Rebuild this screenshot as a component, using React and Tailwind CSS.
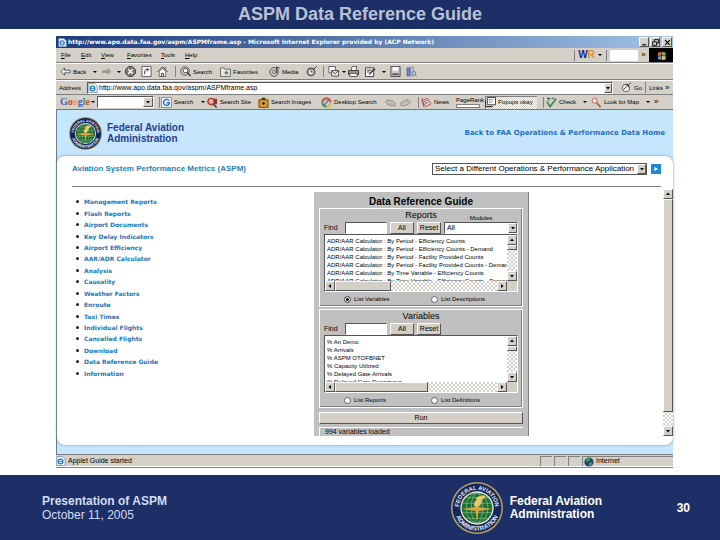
import React, { useState } from 'react';
import clsx from 'clsx';

const menuItems = [
  { name: 'File', width: 'w-5' },
  { name: 'Edit', width: 'w-5' },
  { name: 'View', width: 'w-[26px]' },
  { name: 'Favorites', width: 'w-[34px]' },
  { name: 'Tools', width: 'w-6' },
  { name: 'Help', width: 'w-5' }
];

const navLinks = [
  'Management Reports', 'Flash Reports', 'Airport Documents', 'Key Delay Indicators',
  'Airport Efficiency', 'AAR/ADR Calculator', 'Analysis', 'Causality',
  'Weather Factors', 'Enroute', 'Taxi Times', 'Individual Flights',
  'Cancelled Flights', 'Download', 'Data Reference Guide', 'Information'
];

const reports = [
  'ADR/AAR Calculator : By Period - Efficiency Counts',
  'ADR/AAR Calculator : By Period - Efficiency Counts - Demand',
  'ADR/AAR Calculator : By Period - Facility Provided Counts',
  'ADR/AAR Calculator : By Period - Facility Provided Counts - Demand',
  'ADR/AAR Calculator : By Time Variable - Efficiency Counts',
  'ADR/AAR Calculator : By Time Variable - Efficiency Counts - Demand'
];

const variables = [
  '% An Demo', '% Arrivals', '% ASPM OTOFBNET', '% Capacity Utilized',
  '% Delayed Gate Arrivals', '% Delayed Gate Departures'
];

/* ---------- Icons ---------- */

function Seal({ id, className }) {
  return (
    <svg viewBox="0 0 100 100" className={className} role="img" aria-label="Federal Aviation Administration seal">
      <circle cx="50" cy="50" r="50" fill="#b39b62" />
      <circle cx="50" cy="50" r="47" fill="#14275c" />
      <circle cx="50" cy="50" r="32" fill="#f0efe0" />
      <circle cx="50" cy="50" r="29.5" fill="#1c7034" />
      <g fill="none" stroke="#a9cf9c" strokeWidth="1">
        <ellipse cx="50" cy="50" rx="11" ry="29" />
        <ellipse cx="50" cy="50" rx="21" ry="29" />
        <path d="M22 41h56M22 59h56M28 30h44M28 70h44" />
      </g>
      <path d="M50 78l-3-22-26-4 26-4 3-20 3 20 26 4-26 4z" fill="#d9a441" />
      <path d="M45 47c-2-7 2-12 6-14l-4-1c6-6 14-7 20-5-3 4-4 6-8 8 1 5-1 9-6 12z" fill="#e9c86d" />
      <path id={`${id}-top`} d="M15 50a35 35 0 0 1 70 0" fill="none" />
      <path id={`${id}-bottom`} d="M6.500 50a43.500 43.500 0 0 0 87 0" fill="none" />
      <g fill="#e6e9f2" fontFamily="Liberation Sans, sans-serif" fontWeight="bold" textAnchor="middle">
        <text fontSize="11"><textPath href={`#${id}-top`} startOffset="50%">FEDERAL AVIATION</textPath></text>
        <text fontSize="12"><textPath href={`#${id}-bottom`} startOffset="50%">ADMINISTRATION</textPath></text>
      </g>
    </svg>
  );
}

function Icon({ children, className = 'size-[11px]' }) {
  return (
    <svg viewBox="0 0 12 12" className={clsx('shrink-0', className)} aria-hidden="true">
      {children}
    </svg>
  );
}

const PageIcon = ({ className }) => (
  <Icon className={className}>
    <path d="M1 .5h7l3 3v8H1z" fill="#f2f8fd" stroke="#6b93b8" />
    <circle cx="5.5" cy="6.5" r="2.8" fill="none" stroke="#2b78c2" strokeWidth="1.5" />
    <path d="M3 6.5h5.5" stroke="#2b78c2" />
  </Icon>
);
const BackIcon = () => <Icon><path d="M1 6l4-4v2.5h6v3H5V10z" fill="#e8ece8" stroke="#444" strokeWidth=".9" /></Icon>;
const ForwardIcon = () => <Icon><path d="M11 6L7 2v2.5H1v3h6V10z" fill="#9a9a94" /></Icon>;
const StopIcon = () => (
  <Icon>
    <path d="M4 .5h4L11.5 4v4L8 11.5H4L.5 8V4z" fill="#777" stroke="#444" />
    <path d="M3.5 3.5l5 5m0-5l-5 5" stroke="#fff" strokeWidth="1.4" />
  </Icon>
);
const RefreshIcon = () => (
  <Icon>
    <path d="M1 .5h10v11H1z" fill="#fafafa" stroke="#333" strokeWidth=".8" />
    <path d="M4 9V6c0-2 2-3 4-2M6.5 2l2 2-2 2" fill="none" stroke="#333" />
  </Icon>
);
const HomeIcon = () => (
  <Icon>
    <path d="M.5 6.5L6 1l5.500 5.500" fill="none" stroke="#333" />
    <path d="M2.500 6L6 2.500 9.500 6v5.500h-7z" fill="#fff" stroke="#444" strokeWidth=".8" />
    <path d="M5 11.500V8h2v3.500M9 1v2" stroke="#333" fill="none" />
  </Icon>
);
const FindIcon = () => (
  <Icon>
    <circle cx="5.500" cy="5.500" r="4.700" fill="#c9cccb" stroke="#555" />
    <circle cx="6" cy="5" r="2.500" fill="#fff" stroke="#444" />
    <path d="M8 7l3.500 4" stroke="#333" strokeWidth="1.500" />
  </Icon>
);
const FavoritesIcon = () => (
  <Icon>
    <path d="M.5 2h4l1 1.500h6v8H.5z" fill="#e8e6dd" stroke="#555" strokeWidth=".9" />
    <path d="M7 4.500l.8 1.800 2 .2-1.500 1.300.4 2L7 8.800l-1.700 1 .4-2L4.200 6.500l2-.2z" fill="#777" />
  </Icon>
);
const MediaIcon = () => (
  <Icon>
    <circle cx="5.500" cy="6.500" r="4.800" fill="#bfc4c2" stroke="#555" />
    <circle cx="5.500" cy="6.500" r="1.600" fill="#fff" stroke="#555" />
    <path d="M8.500 8V1l3 1.500" fill="none" stroke="#222" />
  </Icon>
);
const HistoryIcon = () => (
  <Icon>
    <circle cx="5.500" cy="6.500" r="4.800" fill="#555b58" />
    <circle cx="5.500" cy="6.500" r="3" fill="#e9ebea" />
    <path d="M5.500 4.500v2h2M8 4l3.500-3.500" stroke="#333" fill="none" />
  </Icon>
);
const MailIcon = () => (
  <Icon>
    <path d="M1 .5h7v7H1z" fill="#fff" stroke="#555" />
    <path d="M4 5h7.500v6H4z" fill="#eee" stroke="#444" />
    <path d="M4 5l3.700 3.500L11.500 5" fill="none" stroke="#444" />
  </Icon>
);
const PrintIcon = () => (
  <Icon>
    <path d="M3.500 5l1-4.500h5L8.500 5" fill="#fff" stroke="#555" />
    <path d="M.5 5h11v4.500H.5z" fill="#9b9b96" stroke="#333" />
    <path d="M2 8h8v3.500H2z" fill="#eee" stroke="#333" strokeWidth=".8" />
  </Icon>
);
const EditIcon = () => (
  <Icon>
    <path d="M.5 2h9v9.500h-9z" fill="#fff" stroke="#333" />
    <path d="M2 4.500h6M2 6.500h3" stroke="#333" />
    <path d="M4.500 9L11 3" stroke="#333" strokeWidth="1.500" />
  </Icon>
);
const DiscussIcon = () => (
  <Icon>
    <path d="M1 .5h10v11H1z" fill="#c9ccd0" stroke="#444" />
    <path d="M3 1h6v4H3z" fill="#fff" />
    <path d="M2.500 8h7v2h-7z" fill="#555" />
  </Icon>
);
const BooksIcon = () => (
  <Icon>
    <path d="M1 2h3.500v9H1z" fill="#7a7cc0" stroke="#555594" strokeWidth=".6" />
    <path d="M5 1h3v10H5z" fill="#c3c6e8" stroke="#66689c" strokeWidth=".6" />
    <circle cx="8.500" cy="8" r="2" fill="#b9dcdc" stroke="#4f7d85" />
    <path d="M10 9.500l1.500 2" stroke="#4f7d85" />
  </Icon>
);
const GoogleIcon = () => (
  <Icon>
    <path d="M.5.5h11v11H.5z" fill="#e9f0fb" stroke="#6e94cc" />
    <path d="M8.800 4A3.300 3.300 0 1 0 9 7.500V6.300H6.300" fill="none" stroke="#2f6fc4" strokeWidth="1.500" />
  </Icon>
);
const SiteIcon = () => (
  <Icon>
    <circle cx="4.500" cy="5" r="3.500" fill="#e6b5a6" stroke="#b3382c" strokeWidth="1.600" />
    <path d="M7 2h4v6H8z" fill="#9e2f2f" />
    <path d="M7 8l3.500 3.500" stroke="#333" strokeWidth="1.500" />
  </Icon>
);
const ImagesIcon = () => (
  <Icon>
    <path d="M1 3h10v8.500H1z" fill="#d88a1e" stroke="#7c4b10" />
    <path d="M4 .8h4V3H4z" fill="#3c2a12" />
    <circle cx="6" cy="7" r="2.300" fill="#46300f" stroke="#f4d48b" />
  </Icon>
);
const DesktopIcon = () => (
  <Icon>
    <path d="M6 1.500A4.500 4.500 0 0 1 10.500 6" fill="none" stroke="#d94a30" strokeWidth="2.200" />
    <path d="M1.500 6A4.500 4.500 0 0 1 6 1.500" fill="none" stroke="#c8503a" strokeWidth="2.200" />
    <path d="M10.500 6A4.500 4.500 0 0 1 6 10.500" fill="none" stroke="#e3b630" strokeWidth="2.200" />
    <path d="M6 10.500A4.500 4.500 0 0 1 1.500 6" fill="none" stroke="#3d9a4c" strokeWidth="2.200" />
    <path d="M3 9.500L9 2.500" stroke="#4c78bd" strokeWidth="1.500" />
  </Icon>
);
const VoteIcon = ({ flip }) => (
  <Icon className={clsx('size-[11px]', flip && '-scale-x-100')}>
    <path d="M.5 5.500L4 2v2h3.500L11 6.500v3H6.500L4 8v1z" fill="#c2bfb8" stroke="#8d8a84" strokeWidth=".9" />
  </Icon>
);
const NewsIcon = () => (
  <Icon>
    <path d="M1 4l6-2.500 4 6-6 3z" fill="#e8d5cf" stroke="#b94a3c" />
    <path d="M3 5.500l4-1.700M4 7.500l4-1.800" stroke="#5670a8" />
    <path d="M1 1.500l2 9" stroke="#c14233" strokeWidth="1.200" />
  </Icon>
);
const PopupIcon = () => (
  <Icon>
    <path d="M2.500.5h9v8h-9z" fill="#fff" stroke="#333" />
    <path d="M.5 3.500v7h8" fill="none" stroke="#333" strokeWidth="1.200" />
    <path d="M4 3h5M4 5.500h4" stroke="#777" />
  </Icon>
);
const CheckIcon = () => (
  <Icon>
    <path d="M1 5l3.500 5.500L11 2" fill="none" stroke="#3c8a48" strokeWidth="1.800" />
    <path d="M1 1.500h3.500M6 1.500h3M3 1v3" stroke="#334f3c" />
  </Icon>
);
const LookIcon = () => (
  <Icon>
    <circle cx="4" cy="4" r="2.800" fill="#f7e3e0" stroke="#c4564d" />
    <path d="M6 6l4.500 5" stroke="#9d6a3c" strokeWidth="1.800" />
  </Icon>
);
const GoIcon = () => (
  <Icon>
    <circle cx="5.500" cy="6.500" r="4" fill="#f6f6f4" stroke="#555" />
    <path d="M3 8l5-5M8 6V3H5M9 2l2-1" fill="none" stroke="#333" />
  </Icon>
);
const GlobeIcon = () => (
  <Icon className="size-[10px]">
    <circle cx="6" cy="6" r="5.500" fill="#1c4478" />
    <path d="M2 3c2-2 4-2 6-1L6 5 3 6zM6 7l4-1-1 4-3 1z" fill="#3f9c58" />
  </Icon>
);
const FlagIcon = () => (
  <Icon>
    <path d="M2 3l4-1v4L2 6.500z" fill="#d9664f" />
    <path d="M6.500 2l4 .8v3.500l-4-.3z" fill="#7fae5d" />
    <path d="M2 7l4-.5v4l-4-.5z" fill="#6d94cf" />
    <path d="M6.500 6.500l4 .3v3.500l-4 .5z" fill="#dcc55a" />
  </Icon>
);

/* ---------- Small controls ---------- */

function Dot({ width = 'w-2' }) {
  return (
    <span className={clsx('flex items-center', width)}>
      <span className="size-0 border-x-2 border-t-2 border-x-transparent border-t-black"></span>
    </span>
  );
}

const Separator = () => <span className="h-[11px] w-px bg-[#808080]"></span>;

function Arrow({ dir = 'down' }) {
  return (
    <svg viewBox="0 0 6 6" className="size-[6px]" aria-hidden="true">
      <path
        d={{ down: 'M1 2h4L3 4.500z', up: 'M1 4h4L3 1.500z', left: 'M4 1v4L1.500 3z', right: 'M2 1v4l2.500-2z' }[dir]}
        fill="#000"
      />
    </svg>
  );
}

function BevelButton({ children, className, ...rest }) {
  return (
    <button
      type="button"
      className={clsx('flex items-center justify-center border border-t-white border-l-white border-r-[#555] border-b-[#555] bg-[#d4d0c8]', className)}
      {...rest}
    >
      {children}
    </button>
  );
}

function ToolButton({ icon, label, width }) {
  return (
    <button type="button" className={clsx('flex shrink-0 items-center gap-0.5 whitespace-nowrap', width)}>
      {icon}
      <span>{label}</span>
    </button>
  );
}

function ScrollBar({ vertical, thumb }) {
  return (
    <div
      className={clsx(
        'flex [background-image:repeating-conic-gradient(#d4d0c8_0_25%,#fff_0_50%)] bg-[length:4px_4px]',
        vertical ? 'w-[10px] flex-col' : 'h-[10px]'
      )}
    >
      <BevelButton className="size-[10px] shrink-0" aria-label={vertical ? 'Scroll up' : 'Scroll left'}>
        <Arrow dir={vertical ? 'up' : 'left'} />
      </BevelButton>
      <div className={clsx('border border-t-white border-l-white border-r-[#555] border-b-[#555] bg-[#d4d0c8]', thumb)}></div>
      <div className="flex-1"></div>
      <BevelButton className="size-[10px] shrink-0" aria-label={vertical ? 'Scroll down' : 'Scroll right'}>
        <Arrow dir={vertical ? 'down' : 'right'} />
      </BevelButton>
    </div>
  );
}

function ListBox({ items, thumb }) {
  return (
    <div className="grid h-[58px] grid-cols-[minmax(0,1fr)_10px] grid-rows-[minmax(0,1fr)_10px] border border-t-[#555] border-l-[#555] border-r-white border-b-white bg-white">
      <ul className="overflow-hidden pt-0.5 pl-0.5 text-[6px] leading-[8px] whitespace-nowrap">
        {items.map((item) => (
          <li key={item}>{item}</li>
        ))}
      </ul>
      <ScrollBar vertical thumb="h-[5px]" />
      <ScrollBar thumb={thumb} />
      <div className="bg-[#d4d0c8]"></div>
    </div>
  );
}

function Finder({ id, title, items, thumb, modules, options }) {
  const [query, setQuery] = useState('');
  const [choice, setChoice] = useState(modules ? options[0] : '');

  return (
    <section className="flex h-[99px] flex-col border border-white px-1 shadow-[inset_-1px_-1px_0_#808080]">
      <h3 className="h-[13px] text-center text-[9px] leading-[13px]">{title}</h3>
      <div className="flex h-[12px] items-center text-[6px]">
        <label htmlFor={`${id}-find`} className="w-[21px] shrink-0 text-[7px]">Find</label>
        <input
          id={`${id}-find`}
          value={query}
          onChange={(e) => setQuery(e.target.value)}
          className="h-[12px] w-[42px] shrink-0 border border-t-[#555] border-l-[#555] border-r-white border-b-white bg-white px-0.5"
        />
        <BevelButton className="ml-[3px] h-[12px] w-6 text-[7px]" onClick={() => setQuery('')}>All</BevelButton>
        <BevelButton className="ml-[3px] h-[12px] w-6 text-[7px]" onClick={() => setQuery('')}>Reset</BevelButton>
        {modules && (
          <div className="relative ml-[3px] flex-1">
            <label htmlFor={`${id}-modules`} className="absolute -top-2 left-0 w-full text-center leading-[8px]">Modules</label>
            <select
              id={`${id}-modules`}
              className="block h-[12px] w-full appearance-none border border-t-[#555] border-l-[#555] border-r-white border-b-white bg-white px-0.5 text-[7px]"
            >
              <option>All</option>
            </select>
            <span className="pointer-events-none absolute top-px right-px flex h-[10px] w-[9px] items-center justify-center border border-t-white border-l-white border-r-[#555] border-b-[#555] bg-[#d4d0c8]">
              <Arrow />
            </span>
          </div>
        )}
      </div>
      <ListBox items={items} thumb={thumb} />
      <div className="flex flex-1 items-center pl-5 text-[6px]">
        {options.map((option) => (
          <label key={option} className="flex w-[97px] items-center gap-[3px]">
            <input
              type="radio"
              name={id}
              checked={choice === option}
              onChange={() => setChoice(option)}
              className="size-[7px] appearance-none rounded-full border border-[#666] bg-white checked:bg-black checked:shadow-[inset_0_0_0_1px_#fff]"
            />
            {option}
          </label>
        ))}
      </div>
    </section>
  );
}

/* ---------- Browser chrome ---------- */

function BrowserBars() {
  return (
    <div className="bg-[#d4d0c8] text-[6px] leading-[8px]">
      {/* Title bar */}
      <div className="flex h-[12px] items-center gap-px bg-linear-to-r from-[#1d3a7a] to-[#a3c2e6] pr-px pl-0.5 text-white">
        <PageIcon className="size-[9px]" />
        <span className="flex-1 truncate font-['DejaVu_Sans',sans-serif] font-bold">
          http://www.apo.data.faa.gov/aspm/ASPMframe.asp - Microsoft Internet Explorer provided by (ACP Network)
        </span>
        <BevelButton className="size-[10px]" aria-label="Minimize">
          <Icon className="size-[7px]"><path d="M2 10h7" stroke="#000" strokeWidth="2" /></Icon>
        </BevelButton>
        <BevelButton className="size-[10px]" aria-label="Restore">
          <Icon className="size-[7px]"><path d="M4 5V1h7v6H8M1 5h7v6H1z" fill="none" stroke="#000" strokeWidth="1.500" /></Icon>
        </BevelButton>
        <BevelButton className="ml-px size-[10px]" aria-label="Close">
          <Icon className="size-[7px]"><path d="M2 2l8 8M10 2l-8 8" stroke="#000" strokeWidth="2" /></Icon>
        </BevelButton>
      </div>

      {/* Menu bar */}
      <div className="flex h-[15px] items-center border-b border-[#808080] pl-[5px]">
        {menuItems.map((item) => (
          <button key={item.name} type="button" className={clsx('text-left', item.width)}>
            <span className="underline">{item.name[0]}</span>{item.name.slice(1)}
          </button>
        ))}
        <div className="ml-auto flex h-full items-center">
          <Separator />
          <span className="mr-[3px] ml-[3px] text-[10px] font-bold text-[#15239a]">W<span className="text-[#e8902c]">R</span></span>
          <Dot />
          <Separator />
          <span className="ml-[3px] h-[11px] w-7 bg-white"></span>
          <span className="w-[11px] text-center text-[8px]">»</span>
          <span className="flex h-[14px] w-6 items-center justify-center bg-black"><FlagIcon /></span>
        </div>
      </div>

      {/* Standard buttons */}
      <div className="flex h-[17px] items-center border-t border-b border-t-white border-b-[#808080] pl-1">
        <ToolButton icon={<BackIcon />} label="Back" width="w-[33px]" />
        <Dot />
        <ToolButton icon={<ForwardIcon />} width="w-4" />
        <Dot />
        <ToolButton icon={<StopIcon />} width="w-4" />
        <ToolButton icon={<RefreshIcon />} width="w-4" />
        <ToolButton icon={<HomeIcon />} width="w-[18px]" />
        <Separator />
        <span className="w-1"></span>
        <ToolButton icon={<FindIcon />} label="Search" width="w-10" />
        <ToolButton icon={<FavoritesIcon />} label="Favorites" width="w-[49px]" />
        <ToolButton icon={<MediaIcon />} label="Media" width="w-[37px]" />
        <ToolButton icon={<HistoryIcon />} width="w-[17px]" />
        <Separator />
        <span className="w-1"></span>
        <ToolButton icon={<MailIcon />} width="w-[14px]" />
        <Dot width="w-[6px]" />
        <ToolButton icon={<PrintIcon />} width="w-[17px]" />
        <ToolButton icon={<EditIcon />} width="w-[17px]" />
        <Dot />
        <ToolButton icon={<DiscussIcon />} width="w-4" />
        <ToolButton icon={<BooksIcon />} />
      </div>

      {/* Address bar */}
      <div className="flex h-[14px] items-center border-t border-white pl-[3px]">
        <label htmlFor="address" className="w-7">Address</label>
        <div className="flex h-[12px] flex-1 items-center border border-t-[#555] border-l-[#555] border-r-white border-b-white bg-white">
          <PageIcon className="size-[10px]" />
          <input
            id="address"
            defaultValue="http://www.apo.data.faa.gov/aspm/ASPMframe.asp"
            className="h-[10px] min-w-0 flex-1 px-px text-[7px]"
          />
          <BevelButton className="h-[10px] w-2" aria-label="Address history"><Arrow /></BevelButton>
        </div>
        <span className="w-2"></span>
        <ToolButton icon={<GoIcon />} label="Go" width="w-6" />
        <Separator />
        <span className="ml-[3px] w-4">Links</span>
        <span className="w-2 text-[8px]">»</span>
      </div>

      {/* Google toolbar */}
      <div className="flex h-[15px] items-center border-t border-[#808080] pl-1">
        <span className="w-[31px] font-['Liberation_Serif',serif] text-[10px] font-bold">
          <span className="text-[#3b62c4]">G</span>
          <span className="text-[#d0453a]">o</span>
          <span className="text-[#dba52c]">o</span>
          <span className="text-[#3b62c4]">g</span>
          <span className="text-[#3f9a4f]">l</span>
          <span className="text-[#d0453a]">e</span>
        </span>
        <Dot width="w-[6px]" />
        <div className="flex h-[12px] w-[57px] border border-t-[#555] border-l-[#555] border-r-white border-b-white bg-white">
          <input aria-label="Google search" className="w-full min-w-0 px-0.5" />
          <BevelButton className="w-[10px] shrink-0" aria-label="Search history"><Arrow /></BevelButton>
        </div>
        <span className="w-[5px]"></span>
        <Separator />
        <span className="w-px"></span>
        <ToolButton icon={<GoogleIcon />} label="Search" width="w-10" />
        <Dot width="w-[6px]" />
        <ToolButton icon={<SiteIcon />} label="Search Site" width="w-[51px]" />
        <ToolButton icon={<ImagesIcon />} label="Search Images" width="w-[63px]" />
        <ToolButton icon={<DesktopIcon />} label="Desktop Search" width="w-16" />
        <ToolButton icon={<VoteIcon />} width="w-[15px]" />
        <ToolButton icon={<VoteIcon flip />} width="w-[18px]" />
        <Separator />
        <span className="w-0.5"></span>
        <ToolButton icon={<NewsIcon />} label="News" width="w-[35px]" />
        <span className="flex w-[29px] flex-col">
          <span className="leading-[7px]">PageRank</span>
          <span className="h-[4px] w-6 border border-[#808080] bg-white"></span>
        </span>
        <span className="flex h-[13px] w-[52px] items-center [background-image:repeating-conic-gradient(#d4d0c8_0_25%,#fff_0_50%)] bg-[length:2px_2px] shadow-[inset_1px_1px_0_#808080]">
          <ToolButton icon={<PopupIcon />} label="Popups okay" />
        </span>
        <span className="w-[6px]"></span>
        <Separator />
        <span className="w-0.5"></span>
        <ToolButton icon={<CheckIcon />} label="Check" width="w-[37px]" />
        <Dot />
        <ToolButton icon={<LookIcon />} label="Look for Map" width="w-[55px]" />
        <Dot />
        <span className="text-[8px]">»</span>
      </div>
    </div>
  );
}

function StatusBar() {
  return (
    <div className="flex h-[14px] items-center border-t border-b border-[#808080] bg-[#d4d0c8] text-[6px] shadow-[inset_0_-1px_0_#fff]">
      <PageIcon className="size-[10px]" />
      <span className="flex-1 pl-0.5 text-[7px]">Applet Guide started</span>
      {[1, 2, 3].map((cell) => (
        <span key={cell} className="mr-0.5 h-[10px] w-[12px] border-t border-l border-[#808080]"></span>
      ))}
      <span className="flex h-[10px] w-[91px] items-center gap-0.5 border-t border-l border-[#808080] pl-px text-[7px]">
        <GlobeIcon />
        Internet
      </span>
    </div>
  );
}

/* ---------- Web page inside the browser ---------- */

function AspmPage() {
  return (
    <div className="border-t border-l border-[#6c7a84] bg-[#c6e6fd]">
      <header className="flex h-[46px] items-center justify-between pr-2 pl-3">
        <div className="flex items-center gap-[5px]">
          <Seal id="site" className="size-[33px]" />
          <p className="text-[10px] leading-[11px] font-bold text-[#26408c]">Federal Aviation<br />Administration</p>
        </div>
        <a href="#home" className="font-['DejaVu_Sans',sans-serif] text-[7px] font-bold text-[#1f6fc0]">
          Back to FAA Operations &amp; Performance Data Home
        </a>
      </header>

      <main className="rounded-lg bg-white shadow-[0_0_3px_#6f9bb8]">
        <div className="ml-[15px] mr-3 flex h-[31px] items-center justify-between border-b border-[#808080] pb-1">
          <h2 className="text-[8px] font-bold text-[#2a7fb5]">Aviation System Performance Metrics (ASPM)</h2>
          <form className="flex items-center gap-1" onSubmit={(e) => e.preventDefault()}>
            <div className="relative">
              <select
                aria-label="Application"
                className="block h-[12px] w-[215px] appearance-none border border-[#555] bg-white px-0.5 text-[8px] leading-[10px]"
              >
                <option>Select a Different Operations &amp; Performance Application</option>
              </select>
              <span className="pointer-events-none absolute top-px right-px flex h-[10px] w-[9px] items-center justify-center border border-t-white border-l-white border-r-[#555] border-b-[#555] bg-[#d4d0c8]">
                <Arrow />
              </span>
            </div>
            <button type="submit" aria-label="Go" className="flex size-[10px] items-center justify-center bg-[#1f86dc]">
              <svg viewBox="0 0 6 6" className="size-[6px]"><path d="M1.500 1v4L5 3z" fill="#fff" /></svg>
            </button>
          </form>
        </div>

        <div className="flex h-[258px] pt-0.5 pb-[9px]">
          <nav className="min-w-0 flex-1 pt-[7px] pl-[19px]">
            <ul className="grid h-[183px] grid-rows-16 font-['DejaVu_Sans',sans-serif] text-[6px] font-bold">
              {navLinks.map((link) => (
                <li key={link} className="flex items-center gap-[5px]">
                  <span className="size-[3px] rounded-full bg-[#222]"></span>
                  <a href="#report" className="text-[#2377b4]">{link}</a>
                </li>
              ))}
            </ul>
          </nav>

          {/* Guide applet */}
          <section className="mt-[3px] w-[215px] overflow-hidden border-r border-[#808080] bg-[#c0c0c0] px-[5px]">
            <h2 className="h-4 pt-1 text-center text-[10px] leading-[12px] font-bold">Data Reference Guide</h2>
            <Finder
              id="reports"
              title="Reports"
              items={reports}
              thumb="w-[56px]"
              modules
              options={['List Variables', 'List Descriptions']}
            />
            <div className="h-0.5"></div>
            <Finder
              id="variables"
              title="Variables"
              items={variables}
              thumb="w-[93px]"
              options={['List Reports', 'List Definitions']}
            />
            <BevelButton className="mt-1 h-[12px] w-full text-[7px]">Run</BevelButton>
            <p className="mt-[3px] border-t border-l border-white pl-[5px] text-[7px] leading-[8px]">994 variables loaded</p>
          </section>

          <div className="flex w-[144px] justify-end">
            <ScrollBar vertical thumb="h-[213px]" />
          </div>
        </div>
      </main>
      <div className="h-[9px]"></div>
    </div>
  );
}

export default function App() {
  return (
    <div className="flex min-h-screen flex-col bg-white font-['Liberation_Sans',Arial,sans-serif] text-black">
      <header className="flex h-[29px] items-center justify-center bg-[#1c2f66]">
        <h1 className="text-[18px] font-bold text-[#b9c1d4]">ASPM Data Reference Guide</h1>
      </header>

      <div className="flex-1 pt-[7px] pr-[47px] pb-1.5 pl-14">
        <BrowserBars />
        <AspmPage />
        <StatusBar />
      </div>

      <footer className="flex h-[65px] items-center bg-[#1c2f66] pr-[30px] pl-[42px] font-bold text-white">
        <div className="flex-1 text-[12px] leading-[14px] text-[#d3dcf5]">
          <p>Presentation of ASPM</p>
          <p className="font-normal">October 11, 2005</p>
        </div>
        <Seal id="footer" className="size-[52px]" />
        <p className="w-[174px] pl-[7px] text-[12px] leading-[13px]">Federal Aviation<br />Administration</p>
        <span className="text-[12px]">30</span>
      </footer>
    </div>
  );
}
